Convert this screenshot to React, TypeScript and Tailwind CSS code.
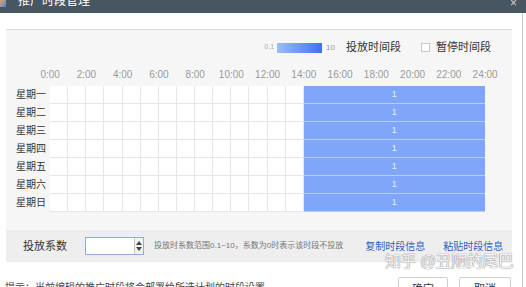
import React from 'react';

const days = ['星期一', '星期二', '星期三', '星期四', '星期五', '星期六', '星期日'];
const hours = ['0:00', '2:00', '4:00', '6:00', '8:00', '10:00', '12:00', '14:00', '16:00', '18:00', '20:00', '22:00', '24:00'];
const whiteCells = Array.from({ length: 14 }, (_, i) => i);

const App: React.FC = () => {
	return (
		<div className="relative w-[526px] h-[287px] overflow-hidden bg-white font-['Liberation_Sans','Noto_Sans_CJK_SC',sans-serif] text-[#333]">
			{/* Title bar */}
			<div className="flex items-start h-[13px] bg-[#485661] overflow-hidden">
				<div className="w-[6px] h-[8px] mt-[-1px] bg-gradient-to-br from-[#f29c38] to-[#2f7fd8]" />
				<div className="ml-[12px] mt-[-5px] text-[12px] leading-[12px] text-white">推广时段管理</div>
				<div className="ml-auto mr-[9px] mt-[-3px] text-[12px] leading-[12px] text-[#d0d6da]">×</div>
			</div>

			<div className="w-[523px] h-[274px] border-r border-[#c8c8c8]">
				<div className="h-[16px]" />

				{/* Main panel */}
				<div className="ml-[6px] w-[506px] border-t border-[#dcdcdc] bg-[#f6f6f6]">
					{/* Legend */}
					<div className="flex items-center justify-end h-[35px] pr-[21px]">
						<span className="text-[7px] text-[#aaa] mr-[3px]">0.1</span>
						<div className="w-[45px] h-[10px] bg-gradient-to-r from-[#9dbdf9] to-[#3f6fef]" />
						<span className="text-[8px] text-[#999] ml-[4px]">10</span>
						<span className="text-[11px] ml-[11px]">投放时间段</span>
						<div className="w-[9px] h-[9px] ml-[20px] bg-white border border-[#c8c8c8]" />
						<span className="text-[11px] ml-[6px]">暂停时间段</span>
					</div>

					{/* Hour labels */}
					<div className="flex h-[21px] pl-[26px] pt-[3px]">
						{hours.map((h) => (
							<div key={h} className="w-[36.25px] text-center text-[10px] leading-[14px] text-[#9a9a9a]">
								{h}
							</div>
						))}
					</div>

					{/* Grid */}
					<div className="flex flex-col">
						{days.map((d) => (
							<div key={d} className="flex h-[18px]">
								<div className="w-[44px] pr-[4px] text-right text-[10px] leading-[18px] text-[#333]">{d}</div>
								<div className="flex w-[435px] border-b border-[#e6e6e6] bg-white">
									{whiteCells.map((c) => (
										<div key={c} className="w-[18.125px] border-r border-[#e6e6e6]" />
									))}
									<div className="flex-1 -mb-px flex items-center justify-center bg-[#7fa6f8] border-b border-[#b4cdfb] text-[9px] leading-none text-[#e8efff]">
										1
									</div>
								</div>
							</div>
						))}
					</div>

					<div className="h-[18px]" />

					{/* Coefficient row */}
					<div className="flex items-center h-[32px] bg-[#eeeeee]">
						<span className="ml-[17px] text-[11px]">投放系数</span>
						<div className="flex ml-[18px] w-[59px] h-[18px] bg-white border border-[#8aaed6]">
							<div className="flex-1" />
							<div className="flex flex-col items-center justify-center gap-[2px] w-[9px] border-l border-[#c8c8c8] bg-[#f3f3f3]">
								<div className="w-0 h-0 border-x-[3px] border-x-transparent border-b-[4px] border-b-[#444]" />
								<div className="w-0 h-0 border-x-[3px] border-x-transparent border-t-[4px] border-t-[#444]" />
							</div>
						</div>
						<span className="ml-[10px] text-[8px] text-[#777]">投放时系数范围0.1~10，系数为0时表示该时段不投放</span>
						<span className="ml-[22px] text-[10px] text-[#2f5fbf]">复制时段信息</span>
						<span className="ml-[18px] text-[10px] text-[#2f5fbf]">粘贴时段信息</span>
					</div>
				</div>

				{/* Footer */}
				<div className="flex items-start mt-[15px] pr-[11px]">
					<span className="ml-[5px] pt-[4px] text-[10px] leading-[14px] text-[#444]">提示：当前编辑的推广时段将会部署给所选计划的时段设置</span>
					<div className="ml-auto flex gap-[11px]">
						<button type="button" className="w-[50px] h-[24px] bg-white border border-[#cfcfcf] rounded-[2px] text-[11px] text-[#333]">
							确定
						</button>
						<button type="button" className="w-[52px] h-[24px] bg-white border border-[#cfcfcf] rounded-[2px] text-[11px] text-[#333]">
							取消
						</button>
					</div>
				</div>
			</div>

			{/* Watermark */}
			<div className="absolute left-[385px] top-[252px] whitespace-nowrap text-[16px] leading-[20px] tracking-[-0.5px] text-[#f3f3f3] [text-shadow:0_0_1px_#8a8a8a,0_0_1px_#8a8a8a]">
				知乎 @丑陋的尾巴
			</div>
		</div>
	);
};

export default App;
